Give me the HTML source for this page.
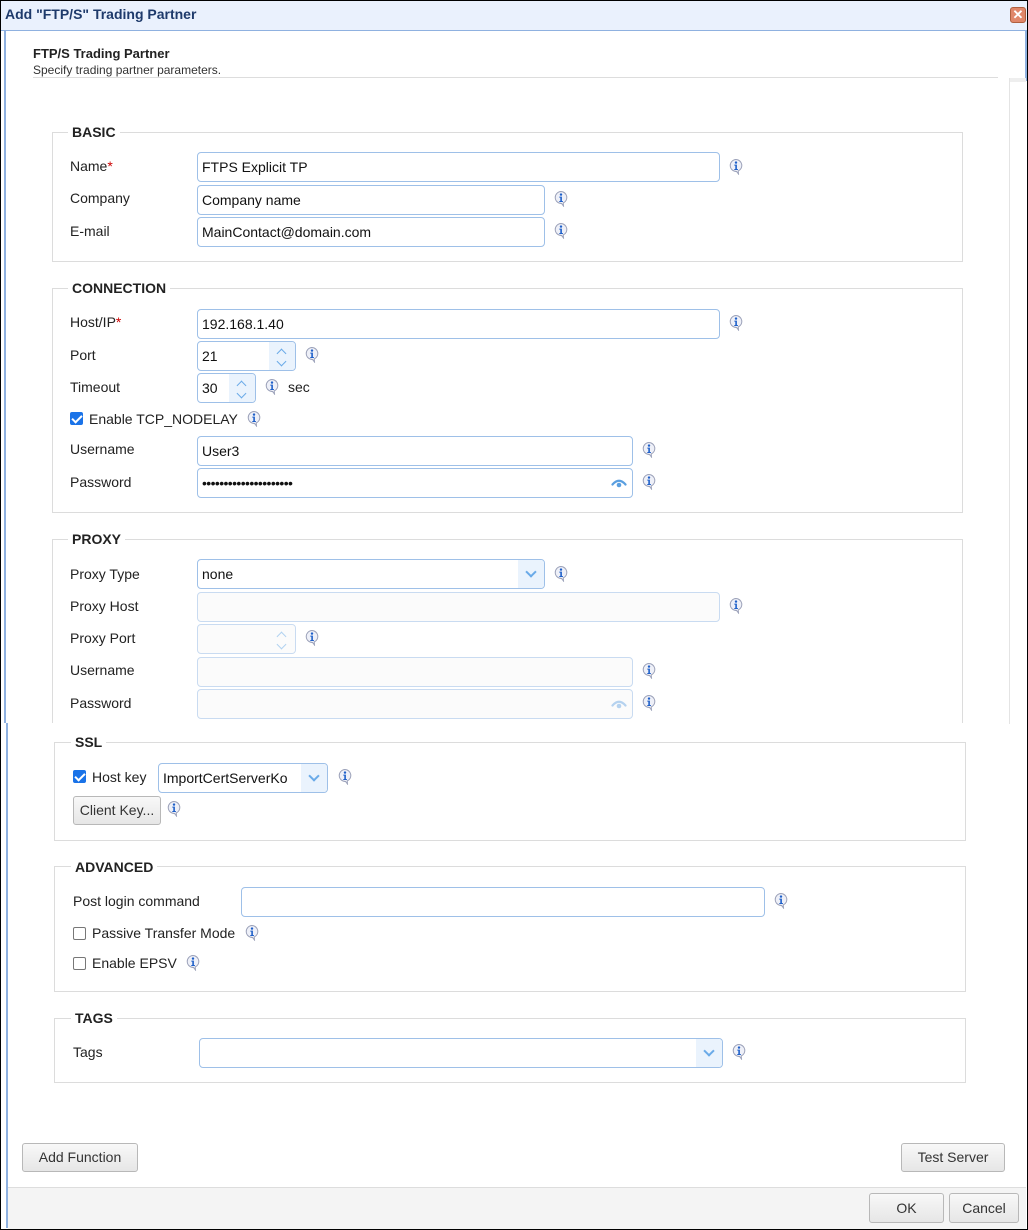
<!DOCTYPE html>
<html><head><style>
*{box-sizing:border-box;margin:0;padding:0}
body{width:1028px;height:1230px;position:relative;background:#fff;font-family:"Liberation Sans",Arial,sans-serif;font-size:14px;color:#222;overflow:hidden}
.a{position:absolute}
.fs{position:absolute;border:1px solid #dcdcdc}
.lg{position:absolute;background:#fff;font-weight:bold;font-size:14px;padding:0 4px;color:#222}
.lb{position:absolute;font-size:14px;color:#222}
.in{position:absolute;height:30px;border:1px solid #9ec0e8;border-radius:4px;background:#fff;padding-left:4px;line-height:28px;font-size:14px;color:#111}
.dis{background:#fbfbfb;border-color:#c9dbf1}
.sp{position:absolute;right:0;top:0;bottom:0;width:26px;background:#eaf3fd;border-radius:0 3px 3px 0}
.sp:before{content:"";position:absolute;left:9px;top:8px;width:6px;height:6px;border-left:1.5px solid #6aaae8;border-top:1.5px solid #6aaae8;transform:rotate(45deg)}
.sp:after{content:"";position:absolute;left:9px;top:16px;width:6px;height:6px;border-right:1.5px solid #6aaae8;border-bottom:1.5px solid #6aaae8;transform:rotate(45deg)}
.dd{position:absolute;right:0;top:0;bottom:0;width:26px;background:#eaf3fd;border-radius:0 3px 3px 0}
.dd:after{content:"";position:absolute;left:9px;top:8px;width:6px;height:6px;border-right:2px solid #6aaae8;border-bottom:2px solid #6aaae8;transform:rotate(45deg)}
.ii{position:absolute;width:16px;height:17px}
.eye{position:absolute;right:5px;top:8px;width:16px;height:12px}
.cb{position:absolute;width:13px;height:13px;border:1px solid #777;border-radius:2px;background:#fff}
.cb.on{background:#1a73e8;border-color:#1a73e8}
.cb.on:after{content:"";position:absolute;left:3px;top:0px;width:4px;height:8px;border-right:2px solid #fff;border-bottom:2px solid #fff;transform:rotate(45deg)}
.bt{position:absolute;height:29px;border:1px solid #b8b8b8;border-radius:3px;background:linear-gradient(#f8f8f8,#e6e6e6);font-size:14px;color:#333;text-align:center;line-height:27px}
.req{color:#c00}
</style></head><body>
<svg width="0" height="0" style="position:absolute"><defs>
<symbol id="info" viewBox="0 0 16 17"><path d="M8 1.5a6 6 0 1 0 0.5 12l2 2.5 -0.3-3A6 6 0 0 0 8 1.5z" fill="#eef0f8" stroke="#9aa0b8" stroke-width="1"/><circle cx="8" cy="4.6" r="1.2" fill="#1d5fc9"/><path d="M6.3 6.6h2.6v4.4h1v1h-3.6v-1h1v-3.4h-1z" fill="#1d5fc9"/></symbol>
<symbol id="eye" viewBox="0 0 16 12"><path d="M1.5 7.5Q8 0 14.5 7.5" fill="none" stroke="currentColor" stroke-width="2.2" stroke-linecap="round"/><circle cx="8" cy="8" r="2.3" fill="currentColor"/></symbol>
</defs></svg>

<div class="a" style="left:0;top:0;width:1028px;height:1230px;border:1px solid #000"></div>
<div class="a" style="left:1px;top:1px;width:1026px;height:30px;background:#eaf1fd;border-bottom:1px solid #8fb1e0"></div>
<div class="a" style="left:5px;top:6px;font-weight:bold;font-size:14px;color:#1e3a6b">Add "FTP/S" Trading Partner</div>
<div class="a" style="left:1010px;top:7px;width:16px;height:16px;background:#e0876a;border:1px solid #b0603f;border-radius:3px;color:#fff;font-size:13px;font-weight:bold;line-height:13px;text-align:center">✕</div>
<div class="a" style="left:4px;top:31px;width:2px;height:692px;background:#8fb1e0"></div>
<div class="a" style="left:6px;top:723px;width:2px;height:505px;background:#8fb1e0"></div>
<div class="a" style="left:1025px;top:31px;width:2px;height:50px;background:#8fb1e0"></div>
<div class="a" style="left:1009px;top:78px;width:17px;height:4px;background:#eee"></div>
<div class="a" style="left:1009px;top:78px;width:1px;height:646px;background:#e4e4e4"></div>

<div class="a" style="left:33px;top:46px;font-weight:bold;font-size:13px">FTP/S Trading Partner</div>
<div class="a" style="left:33px;top:63px;font-size:12px;color:#333">Specify trading partner parameters.</div>
<div class="a" style="left:33px;top:77px;width:965px;height:1px;background:#ddd"></div>

<div class="fs" style="left:52px;top:132px;width:911px;height:130px"></div>
<div class="lg" style="left:68px;top:124px">BASIC</div>
<div class="lb" style="left:70px;top:158px">Name<span class="req">*</span></div>
<div class="in" style="left:197px;top:152px;width:523px">FTPS Explicit TP</div>
<svg class="ii" style="left:728px;top:158px"><use href="#info"/></svg>
<div class="lb" style="left:70px;top:190px">Company</div>
<div class="in" style="left:197px;top:185px;width:348px">Company name</div>
<svg class="ii" style="left:553px;top:190px"><use href="#info"/></svg>
<div class="lb" style="left:70px;top:223px">E-mail</div>
<div class="in" style="left:197px;top:217px;width:348px">MainContact@domain.com</div>
<svg class="ii" style="left:553px;top:222px"><use href="#info"/></svg>

<div class="fs" style="left:52px;top:288px;width:911px;height:225px"></div>
<div class="lg" style="left:68px;top:280px">CONNECTION</div>
<div class="lb" style="left:70px;top:314px">Host/IP<span class="req">*</span></div>
<div class="in" style="left:197px;top:309px;width:523px">192.168.1.40</div>
<svg class="ii" style="left:728px;top:314px"><use href="#info"/></svg>
<div class="lb" style="left:70px;top:347px">Port</div>
<div class="in" style="left:197px;top:341px;width:99px">21<div class="sp"></div></div>
<svg class="ii" style="left:304px;top:346px"><use href="#info"/></svg>
<div class="lb" style="left:70px;top:379px">Timeout</div>
<div class="in" style="left:197px;top:373px;width:59px">30<div class="sp"></div></div>
<svg class="ii" style="left:264px;top:378px"><use href="#info"/></svg>
<div class="lb" style="left:288px;top:379px">sec</div>
<div class="cb on" style="left:70px;top:412px"></div>
<div class="lb" style="left:89px;top:411px">Enable TCP_NODELAY</div>
<svg class="ii" style="left:246px;top:410px"><use href="#info"/></svg>
<div class="lb" style="left:70px;top:441px">Username</div>
<div class="in" style="left:197px;top:436px;width:436px">User3</div>
<svg class="ii" style="left:641px;top:441px"><use href="#info"/></svg>
<div class="lb" style="left:70px;top:474px">Password</div>
<div class="in" style="left:197px;top:468px;width:436px;letter-spacing:-0.6px">•••••••••••••••••••••<svg class="eye" style="color:#5a9fe0"><use href="#eye"/></svg></div>
<svg class="ii" style="left:641px;top:473px"><use href="#info"/></svg>

<div class="a" style="left:52px;top:539px;width:911px;height:184px;border:1px solid #dcdcdc;border-bottom:none"></div>
<div class="lg" style="left:68px;top:531px">PROXY</div>
<div class="lb" style="left:70px;top:566px">Proxy Type</div>
<div class="in" style="left:197px;top:559px;width:348px">none<div class="dd"></div></div>
<svg class="ii" style="left:553px;top:565px"><use href="#info"/></svg>
<div class="lb" style="left:70px;top:598px">Proxy Host</div>
<div class="in dis" style="left:197px;top:592px;width:523px"></div>
<svg class="ii" style="left:728px;top:597px"><use href="#info"/></svg>
<div class="lb" style="left:70px;top:630px">Proxy Port</div>
<div class="in dis" style="left:197px;top:624px;width:99px"><div class="sp" style="background:#fbfbfb;opacity:.5"></div></div>
<svg class="ii" style="left:304px;top:629px"><use href="#info"/></svg>
<div class="lb" style="left:70px;top:662px">Username</div>
<div class="in dis" style="left:197px;top:657px;width:436px"></div>
<svg class="ii" style="left:641px;top:662px"><use href="#info"/></svg>
<div class="lb" style="left:70px;top:695px">Password</div>
<div class="in dis" style="left:197px;top:689px;width:436px"><svg class="eye" style="color:#b5d2ef"><use href="#eye"/></svg></div>
<svg class="ii" style="left:641px;top:694px"><use href="#info"/></svg>

<div class="fs" style="left:54px;top:742px;width:912px;height:99px"></div>
<div class="lg" style="left:71px;top:734px">SSL</div>
<div class="cb on" style="left:73px;top:770px"></div>
<div class="lb" style="left:92px;top:769px">Host key</div>
<div class="in" style="left:158px;top:763px;width:170px">ImportCertServerKo<div class="dd"></div></div>
<svg class="ii" style="left:337px;top:768px"><use href="#info"/></svg>
<div class="bt" style="left:73px;top:796px;width:88px">Client Key...</div>
<svg class="ii" style="left:166px;top:800px"><use href="#info"/></svg>

<div class="fs" style="left:54px;top:866px;width:912px;height:126px"></div>
<div class="lg" style="left:71px;top:859px">ADVANCED</div>
<div class="lb" style="left:73px;top:893px">Post login command</div>
<div class="in" style="left:241px;top:887px;width:524px"></div>
<svg class="ii" style="left:773px;top:892px"><use href="#info"/></svg>
<div class="cb" style="left:73px;top:927px"></div>
<div class="lb" style="left:92px;top:925px">Passive Transfer Mode</div>
<svg class="ii" style="left:244px;top:924px"><use href="#info"/></svg>
<div class="cb" style="left:73px;top:957px"></div>
<div class="lb" style="left:92px;top:955px">Enable EPSV</div>
<svg class="ii" style="left:185px;top:954px"><use href="#info"/></svg>

<div class="fs" style="left:54px;top:1018px;width:912px;height:65px"></div>
<div class="lg" style="left:71px;top:1010px">TAGS</div>
<div class="lb" style="left:73px;top:1044px">Tags</div>
<div class="in" style="left:199px;top:1038px;width:524px"><div class="dd"></div></div>
<svg class="ii" style="left:731px;top:1043px"><use href="#info"/></svg>

<div class="bt" style="left:22px;top:1143px;width:116px">Add Function</div>
<div class="bt" style="left:901px;top:1143px;width:104px">Test Server</div>

<div class="a" style="left:8px;top:1187px;width:1018px;height:42px;background:#f4f4f4;border-top:1px solid #ddd"></div>
<div class="bt" style="left:869px;top:1193px;width:75px;height:30px;line-height:28px">OK</div>
<div class="bt" style="left:949px;top:1193px;width:70px;height:30px;line-height:28px">Cancel</div>
</body></html>
